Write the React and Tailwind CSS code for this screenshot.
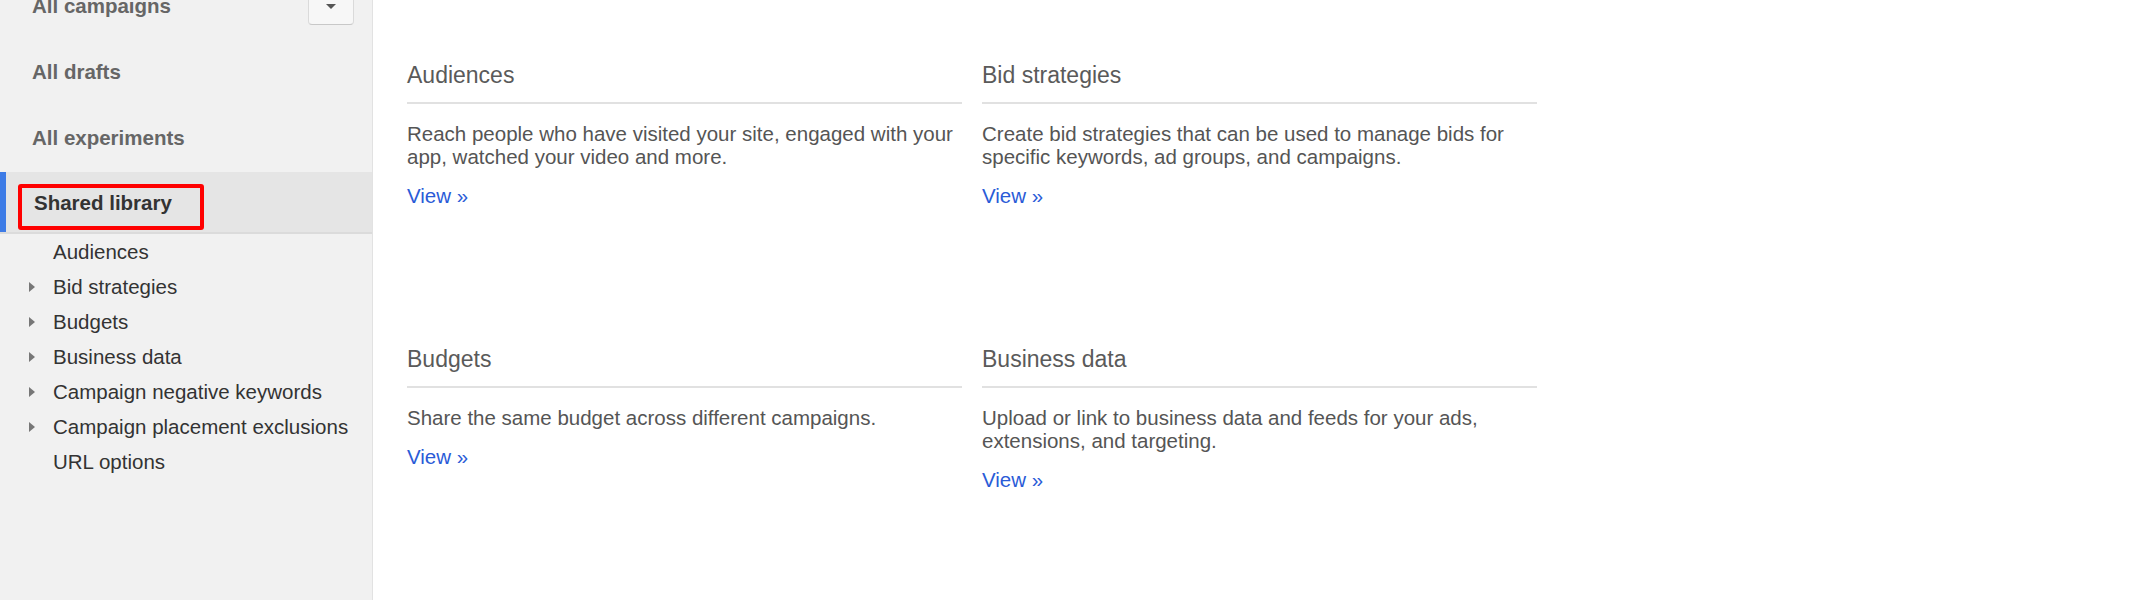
import React from 'react';

const topItems = ['All drafts', 'All experiments'];

const libraryItems = [
    { label: 'Audiences', expandable: false },
    { label: 'Bid strategies', expandable: true },
    { label: 'Budgets', expandable: true },
    { label: 'Business data', expandable: true },
    { label: 'Campaign negative keywords', expandable: true },
    { label: 'Campaign placement exclusions', expandable: true },
    { label: 'URL options', expandable: false },
];

const cards = [
    {
        title: 'Audiences',
        text: 'Reach people who have visited your site, engaged with your app, watched your video and more.',
    },
    {
        title: 'Bid strategies',
        text: 'Create bid strategies that can be used to manage bids for specific keywords, ad groups, and campaigns.',
    },
    {
        title: 'Budgets',
        text: 'Share the same budget across different campaigns.',
    },
    {
        title: 'Business data',
        text: 'Upload or link to business data and feeds for your ads, extensions, and targeting.',
    },
];

function Sidebar() {
    return (
        <aside className="w-[373px] shrink-0 h-[600px] overflow-hidden bg-[#f1f1f1] border-r border-[#e2e2e2]">
            <div className="-mt-[27px]">
                {/* Campaign selector row, scrolled half out of view */}
                <div className="h-[66px] flex items-center justify-between pl-[32px] pr-[18px]">
                    <span className="text-[20.5px] leading-[24px] font-bold text-[#666]">All campaigns</span>
                    <button className="w-[46px] h-[38px] flex items-center justify-center bg-[#f7f7f7] border border-[#dadada] border-b-[#c8c8c8] rounded-sm">
                        <span className="w-0 h-0 border-x-[5px] border-x-transparent border-t-[5px] border-t-[#555]"></span>
                    </button>
                </div>

                {topItems.map((item) => (
                    <div key={item} className="h-[66px] flex items-center pl-[32px]">
                        <span className="text-[20.5px] leading-[24px] font-bold text-[#666]">{item}</span>
                    </div>
                ))}

                {/* Selected section */}
                <div className="relative mt-[1px] h-[60px] flex items-center bg-[#e5e5e5] border-l-[6px] border-[#3d7be6] pl-[28px]">
                    <span className="text-[20.5px] leading-[24px] font-bold text-[#333] pt-[1px]">Shared library</span>
                    <div className="absolute left-[12px] top-[12px] w-[186px] h-[46px] border-4 border-[#ff0000] rounded-[3px] pointer-events-none"></div>
                </div>

                <div className="border-t-2 border-[#dbdbdb]">
                    {libraryItems.map((item) => (
                        <div key={item.label} className="h-[35px] flex items-center pl-[29px]">
                            <span className="w-[24px] flex items-center">
                                {item.expandable && (
                                    <span className="w-0 h-0 border-y-[5px] border-y-transparent border-l-[6px] border-l-[#777]"></span>
                                )}
                            </span>
                            <span className="text-[20.5px] leading-[24px] text-[#333]">{item.label}</span>
                        </div>
                    ))}
                </div>
            </div>
        </aside>
    );
}

function LibraryCard({ title, text }) {
    return (
        <div className="w-[555px] min-h-[284px]">
            <h3 className="text-[23px] leading-[26.5px] text-[#5a5a5a] pb-[13px] border-b-2 border-[#e1e1e1]">{title}</h3>
            <p className="w-[570px] mt-[18px] text-[20.5px] leading-[23px] text-[#555]">{text}</p>
            <a href="#" className="block mt-[16px] text-[20.5px] leading-[23px] text-[#2a5bd7]">View »</a>
        </div>
    );
}

export default function App() {
    return (
        <div className="w-[2140px] h-[600px] flex bg-white font-['Liberation_Sans',Arial,sans-serif] antialiased">
            <Sidebar />
            <main className="flex-1 pl-[34px] pt-[62px]">
                <div className="grid grid-cols-[575px_575px]">
                    {cards.map((c) => (
                        <LibraryCard key={c.title} title={c.title} text={c.text} />
                    ))}
                </div>
            </main>
        </div>
    );
}
